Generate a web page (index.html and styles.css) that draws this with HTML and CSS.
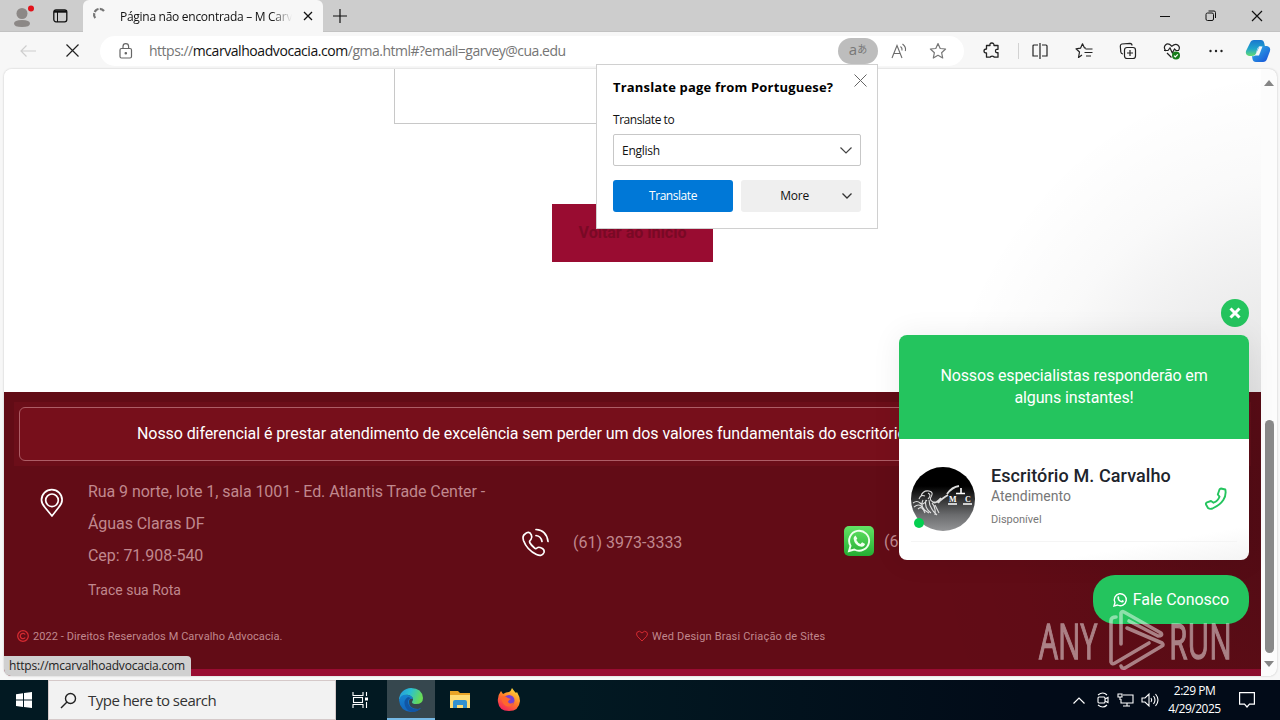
FILE: index.html
```html
<!DOCTYPE html>
<html lang="pt-BR">
<head>
<meta charset="utf-8">
<title>Página não encontrada – M Carvalho</title>
<link rel="stylesheet" href="styles.css">
</head>
<body>
<div class="desktop">
  <header class="tabbar">
    <div class="tab-tools">
      <svg class="profile" width="24" height="26" viewBox="0 0 24 26"><circle cx="10" cy="9.5" r="5.5" fill="#8c8886"/><path d="M2 19.5Q2 16 10 16t8 3.500Q18 23 10 23T2 19.500" fill="#8c8886"/><circle cx="19" cy="4.500" r="3" fill="#e2121a"/></svg>
      <svg width="15" height="14" viewBox="0 0 15 14" fill="none" stroke="#111"><rect x=".8" y=".8" width="13" height="12" rx="2.200" stroke-width="1.300"/><path d="M1 2.500h13" stroke-width="2.400"/><path d="M4.500 3v10"/></svg>
    </div>
    <div class="tab">
      <svg width="16" height="16" viewBox="0 0 16 16" fill="none" stroke="#757575" stroke-width="2.200"><path d="M2.300 10A5.500 5.500 0 0 1 11 3" stroke-dasharray="5 1.200"/></svg>
      <span class="tab-title">Página não encontrada – M Carv</span>
      <svg width="10" height="10" viewBox="0 0 10 10" stroke="#111" stroke-width="1.300"><path d="M1 1l8 8M9 1L1 9"/></svg>
    </div>
    <svg class="new-tab" width="14" height="14" viewBox="0 0 14 14" stroke="#111" stroke-width="1.200"><path d="M7 0v14M0 7h14"/></svg>
    <div class="window-buttons">
      <svg width="12" height="12" viewBox="0 0 12 12" stroke="#111"><path d="M1 6.500h10"/></svg>
      <svg width="12" height="12" viewBox="0 0 12 12" fill="none" stroke="#111"><rect x="1" y="3" width="7.500" height="7.500" rx="1.500"/><path d="M3.500 1H9q1.500 0 1.500 1.500V8"/></svg>
      <svg width="12" height="12" viewBox="0 0 12 12" stroke="#111" stroke-width="1.200"><path d="M1 1l10 10M11 1L1 11"/></svg>
    </div>
  </header>

  <nav class="toolbar">
    <svg class="back" width="16" height="12" viewBox="0 0 16 12" fill="none" stroke="#cecece" stroke-width="1.200"><path d="M16 6H1M6.500.5L1 6l5.500 5.500"/></svg>
    <svg class="stop" width="13" height="13" viewBox="0 0 13 13" stroke="#222" stroke-width="1.200"><path d="M.5.500l12 12M12.500.500l-12 12"/></svg>
    <div class="address">
      <svg width="14" height="16" viewBox="0 0 14 16" fill="none" stroke="#666" stroke-width="1.200"><rect x="1" y="5.500" width="11.500" height="9.500" rx="1.500"/><path d="M4 5.500V3.500a2.800 2.800 0 0 1 5.600 0v2"/><circle cx="6.800" cy="10.300" r=".7" fill="#666"/></svg>
      <span class="url">https://<b>mcarvalhoadvocacia.com</b>/gma.html#?email=garvey@cua.edu</span>
      <span class="translate-pill">a<small>あ</small></span>
      <svg class="read" width="16" height="16" viewBox="0 0 16 16" fill="none" stroke="#6b6b6b" stroke-width="1.100"><path d="M1 15L6 2.500 11 15M2.800 10.500h6.500M9.500 3.500q2 1.500 1.500 4M11.500 1q4 3 2.800 7"/></svg>
      <svg width="18" height="18" viewBox="0 0 18 18" fill="none" stroke="#777" stroke-width="1.200" stroke-linejoin="round"><path d="M9 1.500l2.200 5 5.400.500-4 3.700 1.100 5.300L9 13.300 4.300 16l1.100-5.300-4-3.700 5.400-.500z"/></svg>
    </div>
    <div class="actions">
      <svg width="18" height="18" viewBox="0 0 18 18" fill="none" stroke="#222" stroke-width="1.300" stroke-linejoin="round"><path d="M3.500 3.500H7Q6.500 1 8.800 1T11 3.500h4v3.800q-2.500-.3-2.500 1.700t2.500 1.700v4.500h-3.800q0-1-2-1t-2 1H3.500V11Q1 11 1 9t2.500-2z"/></svg>
      <i class="divider"></i>
      <svg width="18" height="18" viewBox="0 0 18 18" fill="none" stroke="#222" stroke-width="1.200"><path d="M7 3H3Q2 3 2 4v10h5M11 3h4q1 0 1 1v10h-5M9 1v16"/></svg>
      <svg width="18" height="18" viewBox="0 0 18 18" fill="none" stroke="#222" stroke-width="1.200" stroke-linejoin="round"><path d="M11 6L9.500 6 7.500 1.800 5.500 6.200 1 6.800l3.500 3.200-1 5.500L7 13M10.500 7h7M9.500 10.500h8M11 14h5"/></svg>
      <svg width="18" height="18" viewBox="0 0 18 18" fill="none" stroke="#222" stroke-width="1.200"><path d="M4 12q-2-.3-2.200-2L1.300 4q0-1.500 1.500-2L11 1.300q2 0 2 2.200"/><rect x="5.500" y="5.500" width="11" height="11" rx="2.500"/><path d="M11 8v6M8 11h6"/></svg>
      <svg width="18" height="18" viewBox="0 0 18 18" fill="none" stroke="#222" stroke-width="1.200"><path d="M3 9Q0 5.500 2.500 3T8.800 4.200Q12.500 1 15 3.200t.5 5.300M4 11l4.500 4.500M1 8.500h4L7 6l2.300 5L11.500 7l1.500 1.500h3"/><circle cx="13" cy="13.500" r="4" fill="#167c1b" stroke="none"/><path d="M11 13.700l1.300 1.300 2.500-2.700" stroke="#fff"/></svg>
      <svg width="18" height="18" viewBox="0 0 18 18" fill="#222"><circle cx="3.500" cy="9" r="1.200"/><circle cx="9" cy="9" r="1.200"/><circle cx="14.500" cy="9" r="1.200"/></svg>
      <svg class="copilot" width="24" height="24" viewBox="0 0 24 24"><defs><linearGradient id="ca" x1="0" y1="0" x2="0" y2="1"><stop stop-color="#1976cf"/><stop offset=".55" stop-color="#20a5cb"/><stop offset="1" stop-color="#64dc72"/></linearGradient><linearGradient id="cb" x1="0" y1="0" x2="1" y2="1"><stop stop-color="#31b8e5"/><stop offset="1" stop-color="#164dd8"/></linearGradient></defs><path d="M8 1h7q2.500 0 3.200 3l.7 3h-4q-3 0-4 4l-1 4q-1 2-4 2H3q-4-1-3-5L4 4q1-3 4-3" fill="url(#ca)"/><path d="M16 7h5q4 1 3 5l-3 8q-1 3-4 3h-7q-3 0-3.500-3L6 17q3 1 4-2l2-6q1-2 4-2" fill="url(#cb)"/><path d="M13.500 7.500h3l-3.500 9h-4z" fill="#f7f7f7"/></svg>
    </div>
  </nav>

  <div class="viewport">
    <main class="page">
      <section class="hero">
        <div class="search-box"></div>
        <a class="home-button">Voltar ao início</a>
      </section>
      <footer class="footer">
        <div class="banner"><p>Nosso diferencial é prestar atendimento de excelência sem perder um dos valores fundamentais do escritório</p></div>
        <div class="contacts">
          <div class="contact place">
            <svg width="24" height="30" viewBox="0 0 24 30" fill="none" stroke="#fff" stroke-width="1.700"><path d="M12 28L5 19.500Q1.500 15.500 1.500 12a10.300 10.300 0 0 1 20.600 0q0 3.500-3.500 7.500z"/><circle cx="12" cy="12.300" r="6.300"/></svg>
            <div><p>Rua 9 norte, lote 1, sala 1001 - Ed. Atlantis Trade Center -<br>Águas Claras DF<br>Cep: 71.908-540</p><a>Trace sua Rota</a></div>
          </div>
          <div class="contact phone">
            <svg width="28" height="30" viewBox="0 0 28 30" fill="none" stroke="#fff" stroke-width="1.700" stroke-linecap="round"><path d="M4 7Q1 9 2.500 13.500 6 23 15.500 27.500q5.500 2.500 7.500-2 .800-3-2.500-4.500-3-1.500-4.500 0t-3-.500Q10 18 8.700 15.500 8 14 10 12.300q1.500-2 .300-4.500Q8 3.500 4 7z"/><path d="M15 2.500Q25.500 3 27 14.500M15 8.500q5 .5 6 6"/></svg>
            <span>(61) 3973-3333</span>
          </div>
          <div class="contact whats">
            <svg width="30" height="30" viewBox="0 0 30 30"><defs><linearGradient id="wa" x2="0" y2="1"><stop stop-color="#63e365"/><stop offset="1" stop-color="#24ae32"/></linearGradient></defs><rect width="30" height="30" rx="5" fill="url(#wa)"/><path d="M5 25l1.500-5.200A10 10 0 1 1 10.300 23.500z" fill="none" stroke="#efffed" stroke-width="1.900"/><path d="M11.500 9.500l1.800 3-1 1.500q1.500 3 4.200 4l1.600-1.700 3 1.700q-.8 3-3.500 2.700-7-1-8-8-.2-2 1.900-3.200z" fill="#efffed"/></svg>
            <span>(6</span>
          </div>
        </div>
        <div class="credits">
          <span class="copyright"><svg width="12" height="12" viewBox="0 0 12 12" fill="none" stroke="#d52a31" stroke-width="1.300"><circle cx="6" cy="6" r="5.300"/><path d="M8.200 4.500a2.700 2.700 0 1 0 0 3"/></svg>2022 - Direitos Reservados M Carvalho Advocacia.</span>
          <span class="design"><svg width="12" height="12" viewBox="0 0 12 12" fill="none" stroke="#d52a31"><path d="M6 11L1.300 6.200Q-.3 3.800 1.300 2 3.500 0 6 3q2.500-3 4.700-1 1.600 1.800 0 4.200z"/></svg>Wed Design Brasi Criação de Sites</span>
        </div>
      </footer>
      <div class="glow"></div>
      <aside class="chat">
        <button class="chat-close"><svg width="12" height="12" viewBox="0 0 12 12" stroke="#fff" stroke-width="3"><path d="M1.500 1.500l9 9M10.500 1.500l-9 9"/></svg></button>
        <div class="chat-card">
          <h2>Nossos especialistas responderão em<br>alguns instantes!</h2>
          <div class="agent">
            <div class="avatar">
              <svg width="64" height="64" viewBox="0 0 64 64"><defs><linearGradient id="av" x2="0" y2="1"><stop offset=".3"/><stop offset=".75" stop-color="#6b6c6e"/><stop offset="1" stop-color="#939496"/></linearGradient></defs><circle cx="32" cy="32" r="32" fill="url(#av)"/><g fill="none" stroke="#ddd" stroke-width="1.100"><path d="M10 29q2-6 8-5 5 1 2 6-2 3 2 5M8 32q2-5 6-3M17 26q4 2 0 6M2 36q4-3 7 0t7-3M3 40q5-4 8 0M12 33q-4 8 6 13M15 33q-2 8 5 13M18 33q0 8 8 15M21 36q4 4 3 12M24 38l4 8M7 42q4-4 7 4"/><path d="M22 35q3 2 8-4M27 36q3-4 10-8M36 27q5-7 12-8" stroke-width="1.900"/><path d="M45 26.500h9M50 21v5M37 37h9M52 37h9" stroke="#fff" stroke-width="1.600"/></g><text x="38" y="35" class="avatar-letter">M</text><text x="54" y="35" class="avatar-letter">C</text></svg>
              <i class="online"></i>
            </div>
            <div class="agent-text"><strong>Escritório M. Carvalho</strong><span>Atendimento</span><small>Disponível</small></div>
            <svg class="call" width="24" height="24" viewBox="0 0 24 24" fill="none" stroke="#24c45e" stroke-width="1.900" stroke-linejoin="round"><path d="M17 1.500l4.300 1Q22.500 8 19.300 13T8.500 21.500Q6 22.500 4 21l-2-3.500q-.5-1.500 1-2.200l4-1.300 2.500 1.700q4.500-1.700 6-6L13.800 7.500l1.700-5q.5-1 1.500-1z"/></svg>
          </div>
        </div>
        <button class="chat-open"><svg width="15" height="15" viewBox="0 0 15 15"><path d="M1 14l1-3.500a6 6 0 1 1 2.500 2.500z" fill="none" stroke="#fff" stroke-width="1.400"/><path d="M5.500 4l1 2-.5.800Q7 8.500 8.300 9l1-1 1.700 1q-.5 1.700-2.200 1.500Q5 9.500 4.300 6q0-1.400 1.200-2" fill="#fff"/></svg>Fale Conosco</button>
      </aside>
    </main>
    <div class="scrollbar">
      <svg width="10" height="6" viewBox="0 0 10 6"><path d="M0 6L5 0l5 6z" fill="#858585"/></svg>
      <i class="thumb"></i>
      <svg width="10" height="6" viewBox="0 0 10 6"><path d="M0 0l5 6 5-6z" fill="#858585"/></svg>
    </div>
  </div>

  <div class="translate">
    <div class="translate-head"><strong>Translate page from Portuguese?</strong><svg width="13" height="13" viewBox="0 0 13 13" stroke="#666"><path d="M.5.500l12 12M12.500.500l-12 12"/></svg></div>
    <label>Translate to</label>
    <div class="select"><span>English</span><svg width="12" height="7" viewBox="0 0 12 7" fill="none" stroke="#444" stroke-width="1.200"><path d="M.5.500L6 6l5.500-5.500"/></svg></div>
    <div class="buttons"><span class="primary">Translate</span><span class="more"><em>More</em><svg width="10" height="6" viewBox="0 0 10 6" fill="none" stroke="#333" stroke-width="1.300"><path d="M.5.500L5 5l4.500-4.500"/></svg></span></div>
  </div>

  <div class="status">https://mcarvalhoadvocacia.com</div>

  <div class="watermark">
    <span>ANY</span>
    <svg width="56" height="62" viewBox="0 0 56 62" fill="none" stroke="#fff" stroke-width="3.600" stroke-linejoin="round" stroke-linecap="round"><path d="M7 7Q2 7 2 11v41q1 3 4 1l34-20M12 34V3q1-2 3-1l37 21q2 3-3 3L20 11M18 18l35 15q2 2 0 3L16 58q-3 1-4-2"/></svg>
    <span>RUN</span>
  </div>

  <div class="taskbar">
    <div class="start"><svg width="16" height="16" viewBox="0 0 16 16" fill="#fff"><path d="M0 2.200l7-1v6.400H0zM8 1l8-1v7.600H8zM0 8.500h7v6.400l-7-1zM8 8.500h8V16l-8-1z"/></svg></div>
    <div class="search"><svg width="17" height="17" viewBox="0 0 17 17" fill="none" stroke="#222" stroke-width="1.400"><circle cx="10.500" cy="6.500" r="5"/><path d="M7 10L1 16"/></svg><span>Type here to search</span></div>
    <div class="apps">
    <div class="app"><svg width="18" height="18" viewBox="0 0 18 18" fill="none" stroke="#fff" stroke-width="1.100"><path d="M1 1v3.500h10V1M1 17v-3.500h10V17M14.500 1v4M14.500 11v6"/><rect x="1.500" y="6.500" width="9" height="5"/><path d="M13 8h3" stroke-width="3"/></svg></div>
    <div class="app active"><svg width="24" height="24" viewBox="0 0 24 24"><defs><linearGradient id="eg" x2="1" y2=".3"><stop stop-color="#2595dc"/><stop offset=".5" stop-color="#2bc0d1"/><stop offset="1" stop-color="#67db57"/></linearGradient><linearGradient id="eb" x2="0" y2="1"><stop stop-color="#1684cf"/><stop offset="1" stop-color="#1264bd"/></linearGradient></defs><path d="M0 12A12 12 0 0 1 12 0q11 0 12 10 0 6-7 6-4 0-4-2 2-3 0-5Q9 5 4 8q-3 2-4 4" fill="url(#eg)"/><path d="M0 12q2-6 8-5 5 0 6 4-4-1-4 3 0 7 9 7l3-1q-4 4-10 4Q1 23 0 12" fill="url(#eb)"/><path d="M9 9q-5 3-3 9 2 5 7 6 6 0 9-4-3 2-7 1-6-2-6-7 0-3 3-4" fill="#1156a5"/></svg></div>
    <div class="app"><svg width="22" height="20" viewBox="0 0 22 20"><path d="M1 1h8l2 2h10v15H1z" fill="#e9a427"/><path d="M1 5h20v13H1z" fill="#ffdc75"/><path d="M4 18v-6q0-2 2-2h10q2 0 2 2v6h-4v-3H8v3z" fill="#3491cf"/></svg></div>
    <div class="app"><svg width="24" height="24" viewBox="0 0 24 24"><defs><linearGradient id="ff" x1=".8" y1="0" x2=".2" y2="1"><stop stop-color="#ffe23b"/><stop offset=".5" stop-color="#ff7a28"/><stop offset="1" stop-color="#f31c61"/></linearGradient></defs><path d="M4 3l2 3q3-2 6-2 2-1 3-4 2 3 4 5l1-1q3 5 3 9-1 10-11 10T1 14Q0 8 4 3" fill="url(#ff)"/><circle cx="12" cy="12.500" r="5.500" fill="#7440d2"/><path d="M4 9q4-2 7 1l3 1q-3 1-3 3 2 3 6 0-2 6-8 4-4-2-5-9" fill="#ff672d"/></svg></div>
    </div>
    <div class="tray">
      <svg width="12" height="7" viewBox="0 0 12 7" fill="none" stroke="#fff" stroke-width="1.200"><path d="M.5 6.500L6 1l5.500 5.500"/></svg>
      <svg width="12" height="16" viewBox="0 0 12 16" fill="none" stroke="#fff" stroke-width="1.100"><path d="M1 3q5-4 9 0M1 13q5 4 9 0M8 7l3-1.500v5L8 9"/><rect x="1" y="5" width="7" height="6" rx="1"/></svg>
      <svg width="17" height="14" viewBox="0 0 17 14" fill="none" stroke="#fff" stroke-width="1.100"><path d="M6 2h10v8H4V6M10 10v3M6 13h7"/><path d="M1 1h4v3H1zM3 4v3"/></svg>
      <svg width="18" height="14" viewBox="0 0 18 14" fill="none" stroke="#fff" stroke-width="1.100"><path d="M1 5h3l4-4v12L4 9H1zM10 5q1.500 2 0 4M12.500 3q3 4 0 8M14.500 1q5 6 0 12"/></svg>
      <div class="clock">2:29 PM<br>4/29/2025</div>
      <svg width="16" height="16" viewBox="0 0 16 16" fill="none" stroke="#fff" stroke-width="1.200"><path d="M.6.600h14.800v11.500H10.500L8 15l-2.500-2.900H.6z"/></svg>
    </div>
  </div>
</div>
</body>
</html>
```
FILE: styles.css
```css
* { box-sizing: border-box; }
body { margin: 0; overflow: hidden; font-family: "Open Sans", "Noto Sans", sans-serif; }
p, h2 { margin: 0; }
svg { display: block; flex: none; overflow: visible; }
button { border: 0; padding: 0; font: inherit; }
.desktop { position: relative; width: 1280px; height: 720px; display: flex; flex-direction: column; background: #f7f7f7; overflow: hidden; white-space: nowrap; }

.tabbar { height: 32px; flex: none; display: flex; align-items: center; background: #cdcdcd; border-bottom: 1px solid #c2c2c2; }
.tab-tools { width: 83px; display: flex; align-items: center; padding-left: 12px; gap: 17px; }
.profile { margin-top: 2px; }
.tab { width: 240px; height: 32px; align-self: flex-start; display: flex; align-items: center; padding: 0 11px 0 10px; gap: 11px; background: #f7f7f7; border-radius: 6px 6px 0 0; }
.tab-title { width: 173px; font-size: 12px; letter-spacing: -.28px; color: #111; -webkit-mask-image: linear-gradient(90deg, #000 88%, transparent); mask-image: linear-gradient(90deg, #000 88%, transparent); }
.new-tab { margin-left: 10px; }
.window-buttons { display: flex; gap: 34px; margin-left: auto; padding-right: 17px; }

.toolbar { height: 37px; flex: none; display: flex; align-items: center; padding-left: 20px; }
.stop { margin-left: 30px; }
.address { display: flex; align-items: center; width: 864px; height: 30px; margin-left: 21px; padding-left: 19px; border-radius: 15px; background: #fff; }
.url { width: 689px; margin-left: 16px; font-size: 14px; letter-spacing: -.5px; color: #757575; }
.url b { font-weight: 400; color: #111; letter-spacing: -.43px; }
.translate-pill { display: flex; justify-content: center; align-items: center; width: 40px; height: 26px; border-radius: 13px; background: #bdbdbd; color: #777; font-size: 15px; line-height: 24px; padding-bottom: 3px; }
.translate-pill small { font-family: "Noto Sans CJK JP", sans-serif; font-size: 10px; line-height: 20px; }
.read { margin: 0 22px 0 13px; }
.actions { display: flex; align-items: center; gap: 26px; margin-left: 19px; }
.divider { width: 1px; height: 16px; margin: 0 -14px 0 -9px; background: #d2d2d2; }
.actions .copilot { margin-left: -5px; }

.viewport { display: flex; width: 1273px; height: 607px; margin: 0 4px; border-radius: 8px; overflow: hidden; background: #fcfcfc; box-shadow: 0 0 2px #bbb; flex: none; }
.page { position: relative; width: 1257px; font-family: Roboto, sans-serif; background: #fff; }
.hero { height: 323px; padding-left: 390px; }
.search-box { width: 480px; height: 55px; border: 1px solid #c8c8c8; border-top: 0; }
.home-button { display: block; width: 161px; height: 58px; margin: 80px 0 0 158px; background: #990c31; color: #790925; font-size: 16px; font-weight: 700; line-height: 57px; text-align: center; }
.footer { height: 284px; padding: 10px 10px 0; background: #620c16; border-bottom: 7px solid #990c31; color: #c0888e; }
.banner { height: 64px; padding: 5px; background: #6c0e19; }
.banner p { height: 54px; padding-left: 117px; overflow: hidden; border: 1px solid #ad5d66; border-radius: 6px; background: #770f1b; color: #fff; font-size: 16px; line-height: 52px; letter-spacing: -.08px; }
.contacts { display: flex; height: 154px; }
.contact { display: flex; font-size: 16px; }
.place { width: 507px; padding: 10px 0 0 26px; gap: 24px; }
.place > svg { margin-top: 12px; }
.place p { line-height: 32px; letter-spacing: -.07px; }
.place a { display: block; margin-top: 10px; font-size: 14px; letter-spacing: 0; }
.phone { width: 323px; align-items: center; gap: 24px; padding-bottom: 2px; }
.whats { align-items: center; gap: 10px; padding-bottom: 4px; }
.credits { display: flex; height: 32px; align-items: center; padding-left: 3px; font-size: 11px; letter-spacing: .08px; }
.credits span { display: flex; align-items: center; gap: 4px; }
.credits .design { letter-spacing: .18px; }
.copyright { width: 619px; }
.glow { position: absolute; inset: 0; background: radial-gradient(ellipse 370px 440px at 1290px 440px, rgba(10,10,15,.2), rgba(10,10,15,.09) 40%, rgba(10,10,15,.025) 75%, transparent); pointer-events: none; }

.chat { position: absolute; top: 230px; right: 12px; width: 350px; display: flex; flex-direction: column; align-items: flex-end; }
.chat-close { display: grid; place-items: center; width: 28px; height: 28px; border-radius: 50%; background: #24c45e; }
.chat-card { width: 350px; height: 225px; margin: 8px 0 15px; overflow: hidden; border-radius: 8px; background: linear-gradient(170deg, #fff 88%, #f4f4f4); box-shadow: 0 0 30px rgba(0,0,0,.07); }
.chat-card h2 { height: 104px; padding-top: 30px; background: #24c45e; color: #fff; font-size: 16px; font-weight: 400; line-height: 22px; letter-spacing: -.13px; text-align: center; }
.agent { display: flex; height: 103px; margin: 0 12px; padding-top: 28px; border-bottom: 1px solid #f5f5f5; }
.avatar { position: relative; width: 80px; }
.avatar-letter { font: 700 8px "Liberation Serif", serif; fill: #fff; }
.online { position: absolute; left: 3px; top: 51px; width: 10px; height: 10px; border-radius: 50%; background: #05cf50; }
.agent-text { width: 213px; display: flex; flex-direction: column; color: #777; }
.agent-text strong { font-size: 18px; font-weight: 500; line-height: 20px; letter-spacing: .09px; margin-top: -1px; color: #20242c; }
.agent-text span { font-size: 14px; line-height: 20px; }
.agent-text small { margin-top: 6px; font-size: 11px; line-height: 16px; }
.call { margin-top: 20px; }
.chat-open { display: flex; align-items: center; justify-content: center; gap: 5px; width: 156px; height: 49px; border-radius: 22px; background: #24c45e; color: #fff; font-size: 16px; letter-spacing: -.05px; }
.scrollbar { width: 16px; padding: 11px 0 9px; display: flex; flex-direction: column; align-items: center; }
.thumb { width: 9px; height: 233px; margin: auto 0 8px; border-radius: 5px; background: #898989; }

.translate { position: absolute; left: 596px; top: 64px; width: 282px; height: 165px; padding: 9px 16px; border: 1px solid #d0d0d0; background: #fff; color: #111; font-size: 12px; letter-spacing: -.15px; }
.translate-head { display: flex; justify-content: space-between; height: 36px; margin-right: -6px; font-size: 13px; line-height: 27px; letter-spacing: .18px; color: #000; }
.translate label { display: block; height: 24px; line-height: 20px; letter-spacing: -.45px; }
.select { height: 32px; display: flex; align-items: center; justify-content: space-between; padding: 0 8px; border: 1px solid #c7c7c7; border-radius: 2px; letter-spacing: -.25px; }
.buttons { display: flex; gap: 8px; margin-top: 14px; line-height: 32px; text-align: center; letter-spacing: -.45px; }
.buttons > span { width: 120px; height: 32px; border-radius: 3px; background: #efefef; }
.buttons .primary { background: #0078d7; color: #fff; }
.more { display: flex; align-items: center; justify-content: flex-end; gap: 33px; padding-right: 9px; }
.more em { font-style: normal; letter-spacing: -.2px; }
.status { position: absolute; left: 4px; top: 656px; width: 187px; height: 20px; padding-left: 5px; border-radius: 0 4px 0 7px; background: #d0d0d0; color: #222; font-size: 12px; line-height: 20px; letter-spacing: -.2px; }
.watermark { position: absolute; left: 1039px; top: 610px; display: flex; align-items: center; opacity: .48; color: #fff; font: 49px/62px "Open Sans", sans-serif; -webkit-text-stroke: 1.3px #fff; }
.watermark span { width: 68px; margin-top: -3px; transform: scaleX(.61); transform-origin: 0 50%; }
.watermark svg { margin-right: 4px; margin-left: 2px; }

.taskbar { height: 40px; flex: none; margin-top: 4px; display: flex; background: linear-gradient(90deg, #021922 45%, #020b18 80%); }
.start { width: 48px; display: grid; place-items: center; }
.search { width: 288px; display: flex; align-items: center; gap: 11px; padding-left: 11px; border: 1px solid #d5c9c9; background: #f2f2f2; color: #333; font-size: 15px; letter-spacing: -.52px; }
.apps { display: flex; padding-left: 2px; }
.app { width: 48px; margin-right: 1px; display: grid; place-items: center; }
.app:first-child { padding-right: 2px; }
.app.active { background: #36474e; border-bottom: 2px solid #75b9e5; padding-top: 1px; }
.tray { display: flex; align-items: center; gap: 7.500px; margin-left: auto; padding-right: 25px; }
.tray > svg:first-child { margin-right: 5px; }
.clock { width: 56px; margin-right: 1px; color: #fff; font-size: 12px; line-height: 18px; letter-spacing: -.5px; text-align: center; }
.clock + svg { margin-left: 8px; }
```
